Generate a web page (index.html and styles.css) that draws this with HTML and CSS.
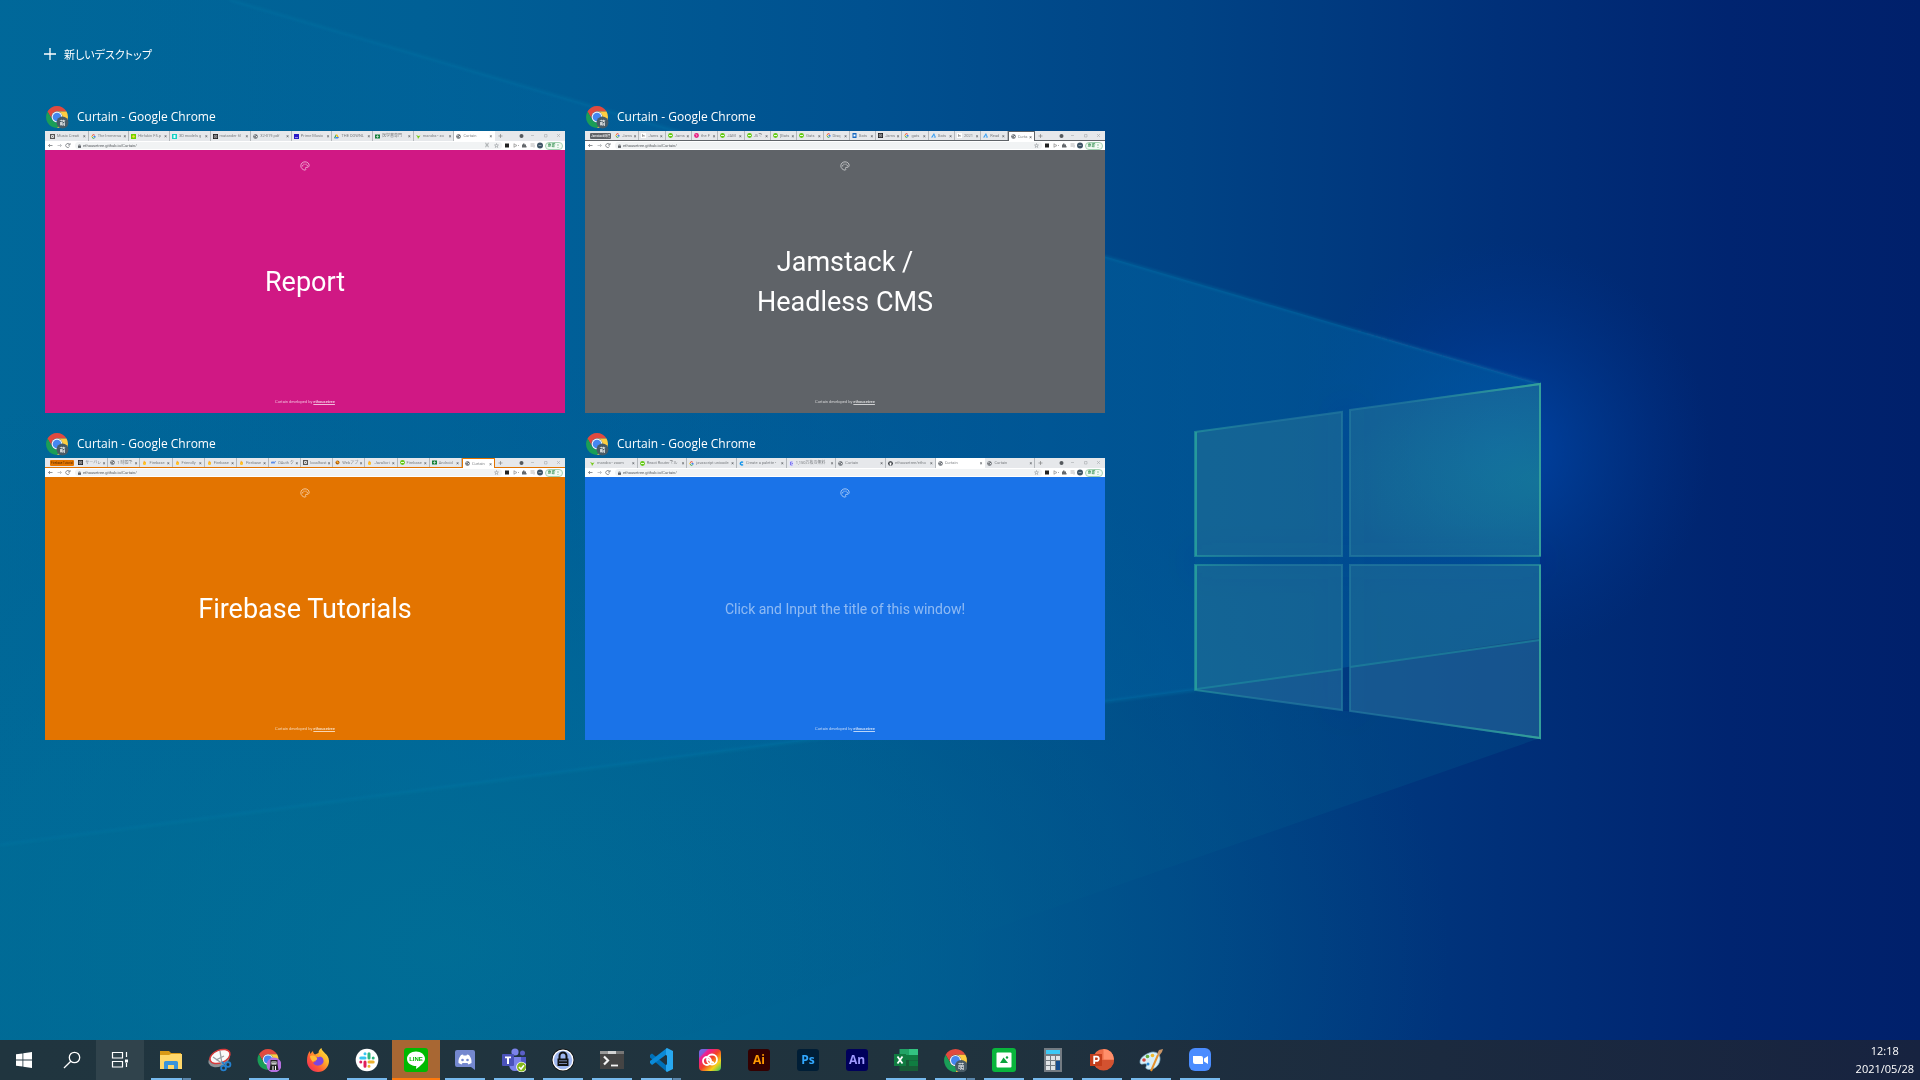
FILE: index.html
```html
<!DOCTYPE html>
<html lang="ja">
<head>
<meta charset="utf-8">
<meta name="viewport" content="width=device-width, initial-scale=1">
<title>タスク ビュー</title>
<link rel="stylesheet" href="styles.css">
</head>
<body>

<svg class="symbols" aria-hidden="true">
  <symbol id="chrome" viewBox="0 0 24 24">
    <path fill="#e04a3f" d="M12 6.5H21.5A11 11 0 0 0 2.5 6.5L7.2 14.7A5.5 5.5 0 0 1 12 6.5Z"/>
    <path fill="#ffcd40" d="M21.5 6.5H12A5.5 5.5 0 0 1 16.8 14.7L12 23A11 11 0 0 0 21.5 6.5Z"/>
    <path fill="#1a9e57" d="M2.5 6.5A11 11 0 0 0 12 23L16.8 14.7A5.5 5.5 0 0 1 7.2 14.7Z"/>
    <circle cx="12" cy="12" r="5.4" fill="#f4f4f4"/><circle cx="12" cy="12" r="4.3" fill="#4587f0"/>
  </symbol>
  <symbol id="chrome-moe" viewBox="0 0 24 24">
    <use href="#chrome" x="0" y="0" width="24" height="24"/>
    <circle cx="17.5" cy="17.5" r="6" fill="#495b66"/>
    <text x="17.5" y="20" text-anchor="middle" class="moe">萌</text>
  </symbol>
  <symbol id="palette" viewBox="0 0 24 24">
    <path fill="none" stroke="#fff" stroke-width="2.4" d="M12 22C6 21 2 17 2 11.500C2 6 6.500 2 12 2s10 3.500 10 8.500c0 3-2.500 5-5.500 5h-2c-1.500 0-2 1.500-1.200 2.600C14.500 20 13.800 22 12 22Z"/>
    <g fill="#fff"><circle cx="6.500" cy="11.500" r="1.600"/><circle cx="9.500" cy="7.500" r="1.600"/><circle cx="14.500" cy="7.500" r="1.600"/><circle cx="17.500" cy="11.500" r="1.600"/></g>
  </symbol>
  <symbol id="f-globe" viewBox="0 0 10 10"><circle cx="5" cy="5" r="4.500" fill="#5f6368"/><path fill="#e8eaed" d="M2 3l3-1 0 2-2 1zM6 4l2.500 0-1 3-2-1zM3 6l2 1-1 2z"/></symbol>
  <symbol id="f-google" viewBox="0 0 10 10"><g fill="none" stroke-width="2"><path stroke="#e94235" d="M2 3.500A3.500 3.500 0 0 1 7.500 2.500"/><path stroke="#fbbc04" d="M2 3.500A3.500 3.500 0 0 0 2 6.500"/><path stroke="#34a853" d="M2 6.500A3.500 3.500 0 0 0 7.500 7.500"/><path stroke="#4285f4" d="M5 5H8.500A3.500 3.500 0 0 1 7.500 7.500"/></g></symbol>
  <symbol id="f-green" viewBox="0 0 10 10"><circle cx="5" cy="5" r="4.800" fill="#63c916"/><path fill="#e9ffd8" d="M2 4h6v2H2z"/></symbol>
  <symbol id="f-pink" viewBox="0 0 10 10"><circle cx="5" cy="5" r="4.800" fill="#e81e82"/><path d="M3 3l3 1-1 3" stroke="#fff" fill="none"/></symbol>
  <symbol id="f-flame" viewBox="0 0 10 10"><path fill="#ffa000" d="M2 8L4 1l2 3 1-1 1 5-3 2z"/><path fill="#ffcb2b" d="M2 8l4-4 2 4-3 2z"/></symbol>
  <symbol id="f-dark" viewBox="0 0 10 10"><path fill="#202124" d="M0 0h10v10H0z"/><path fill="none" stroke="#fff" d="M2.500 2.500h5v5h-5zM4 4l2 2"/></symbol>
  <symbol id="f-frame" viewBox="0 0 10 10"><path fill="#555" d="M0 0h10v10H0z"/><path fill="#ddd" d="M2 2h6v6H2z"/><path stroke="#555" d="M3 3l4 4M7 3l-4 4"/></symbol>
  <symbol id="f-lime" viewBox="0 0 10 10"><path fill="#6ad300" d="M0 0h10v10H0z"/><circle cx="5" cy="5" r="2.500" fill="#ffd83b"/></symbol>
  <symbol id="f-teal" viewBox="0 0 10 10"><path fill="#14d0c5" d="M0 0h10v10H0z"/><path fill="#e4ffff" d="M3 2h4v6H3z"/></symbol>
  <symbol id="f-navy" viewBox="0 0 10 10"><path fill="#2717c7" d="M0 0h10v10H0z"/><path stroke="#fff" d="M2 7h6"/></symbol>
  <symbol id="f-drive" viewBox="0 0 10 10"><path fill="#34a853" d="M3.500 1L0 8l2 1 3-6z"/><path fill="#fbbc04" d="M3.500 1h3L10 7H7z"/><path fill="#4285f4" d="M2 9l1.500-3H10L8 9z"/></symbol>
  <symbol id="f-book" viewBox="0 0 10 10"><path fill="#16803a" d="M0 1h10v8H0z"/><path stroke="#fff" d="M2 5h6M5 2v6"/></symbol>
  <symbol id="f-leaf" viewBox="0 0 10 10"><path fill="#76c81b" d="M0 2l5 2 4-1-3 4-2 3-1-4z"/></symbol>
  <symbol id="f-blue" viewBox="0 0 10 10"><path fill="#1769c2" d="M1 0h8v10H1z"/><path fill="#fff" d="M3 3h4v4H3z"/></symbol>
  <symbol id="f-azure" viewBox="0 0 10 10"><path fill="#3aa0f3" d="M6 0L0 9h3l3-5 1 3-2 2h5z"/></symbol>
  <symbol id="f-page" viewBox="0 0 10 10"><path fill="#fff" d="M0 0h10v10H0z"/><path stroke="#666" d="M3 2v6M3 5h4M6 5v3"/></symbol>
  <symbol id="f-fox" viewBox="0 0 10 10"><circle cx="5" cy="5" r="4" fill="#a75c12"/><path fill="#ffb22d" d="M2 2l4 1 2 4-4-1z"/></symbol>
  <symbol id="f-doc" viewBox="0 0 10 10"><path fill="#e5e5f8" d="M0 0h10v10H0z"/><path fill="none" stroke="#5d55ef" stroke-width="1.500" d="M7 2H3v6h4M5 5h3"/></symbol>
  <symbol id="f-c" viewBox="0 0 10 10"><path fill="none" stroke="#1595ea" stroke-width="3" d="M8 3A3 3 0 1 0 8 7"/></symbol>
  <symbol id="f-w" viewBox="0 0 10 10"><path fill="none" stroke="#4e82e8" stroke-width="1.800" d="M0 3l2 4 2-4 2 4 3-5"/></symbol>
  <symbol id="f-git" viewBox="0 0 10 10"><circle cx="5" cy="5" r="4.700" fill="#24292e"/><path fill="#fff" d="M3 3h4v3L6 9H4L3 6z"/></symbol>
  <symbol id="nav" viewBox="0 0 30 9">
    <g fill="none" stroke="#75797d" stroke-width=".8"><path d="M7.500 4.500h-4M5 3L3.500 4.500 5 6"/><path stroke="#b5b8bb" d="M12.500 4.500h4M15 3l1.500 1.500L15 6"/><path d="M24.500 3.500a2 2 0 1 0 0 2M25 2v2h-2"/></g>
  </symbol>
  <symbol id="lock" viewBox="0 0 4 5"><path fill="#5f6368" d="M0 2h4v3H0z"/><path fill="none" stroke="#5f6368" stroke-width=".8" d="M1 2V1h2v1"/></symbol>
  <symbol id="star" viewBox="0 0 10 10"><path fill="none" stroke="#888c90" d="M5 1l1 3h3L6.500 6l1 3L5 7.300 2.500 9l1-3L1 4h3z"/></symbol>
  <symbol id="exts" viewBox="0 0 43 9">
    <path fill="#222" d="M3 2.500h4v4H3z"/><path fill="none" stroke="#999" stroke-width=".8" d="M12 2.500v4M12 3l3 1.500-3 1.500M16 4.500h1"/>
    <path fill="#65696d" d="M20 3.500h1v-1h1.500v1H24v1.500h.5v1.500H20z"/><path fill="none" stroke="#a5a5a5" stroke-width=".8" d="M28.500 3h4M28.500 5h2.500M32 4v2.500"/>
    <circle cx="38" cy="4.500" r="3" fill="#3f5566"/><path stroke="#8f9da8" d="M36.500 4.500h3"/>
  </symbol>
  <symbol id="winctl" viewBox="0 0 70 10">
    <path stroke="#777" d="M3.500 5h4M5.500 3v4" stroke-width=".6"/><circle cx="26.500" cy="5" r="2" fill="#55595d"/>
    <path fill="none" stroke="#a8abae" stroke-width=".6" d="M36 4.500h3M49.500 3.500h2.500v2.500h-2.500zM62 3l3 3M65 3l-3 3"/>
  </symbol>
</svg>

<svg class="wallpaper" viewBox="0 0 1920 1080" preserveAspectRatio="none" aria-hidden="true">
  <defs>
    <linearGradient id="base" x1="0" y1="0" x2="1" y2="0">
      <stop offset="0" stop-color="#006798"/><stop offset=".22" stop-color="#006096"/><stop offset=".45" stop-color="#005190"/>
      <stop offset=".62" stop-color="#004385"/><stop offset=".78" stop-color="#003079"/><stop offset=".9" stop-color="#002470"/><stop offset="1" stop-color="#00206b"/>
    </linearGradient>
    <radialGradient id="teal" gradientUnits="userSpaceOnUse" cx="450" cy="950" r="1000" gradientTransform="matrix(1 0 0 .6 0 380)">
      <stop offset="0" stop-color="#007096" stop-opacity=".85"/><stop offset=".5" stop-color="#006c94" stop-opacity=".5"/><stop offset="1" stop-color="#005c8c" stop-opacity="0"/>
    </radialGradient>
    <radialGradient id="glow" gradientUnits="userSpaceOnUse" cx="1500" cy="450" r="210">
      <stop offset="0" stop-color="#0048b0" stop-opacity=".85"/><stop offset=".4" stop-color="#0042a2" stop-opacity=".5"/><stop offset="1" stop-color="#003490" stop-opacity="0"/>
    </radialGradient>
    <linearGradient id="beam" gradientUnits="userSpaceOnUse" x1="300" y1="0" x2="1540" y2="0">
      <stop offset="0" stop-color="#0070a8" stop-opacity=".1"/><stop offset=".6" stop-color="#0068a4" stop-opacity=".42"/><stop offset="1" stop-color="#0064a4" stop-opacity=".5"/>
    </linearGradient>
    <linearGradient id="lower" gradientUnits="userSpaceOnUse" x1="0" y1="0" x2="1540" y2="0">
      <stop offset="0" stop-color="#00759a" stop-opacity=".1"/><stop offset="1" stop-color="#004e88" stop-opacity=".4"/>
    </linearGradient>
    <linearGradient id="ray" gradientUnits="userSpaceOnUse" x1="0" y1="0" x2="1540" y2="0">
      <stop offset="0" stop-color="#1688b0" stop-opacity=".14"/><stop offset="1" stop-color="#1687b5" stop-opacity=".28"/>
    </linearGradient>
    <radialGradient id="shine" gradientUnits="userSpaceOnUse" cx="1540" cy="480" r="200" gradientTransform="matrix(1 0 0 .5 0 240)">
      <stop offset="0" stop-color="#148c98" stop-opacity=".4"/><stop offset="1" stop-color="#148c98" stop-opacity="0"/>
    </radialGradient>
    <linearGradient id="edge" gradientUnits="userSpaceOnUse" x1="1195" y1="0" x2="1541" y2="0">
      <stop offset="0" stop-color="#24929c"/><stop offset=".2" stop-color="#22789e"/><stop offset=".8" stop-color="#22789e"/><stop offset="1" stop-color="#2a909c"/>
    </linearGradient>
    <linearGradient id="rim" gradientUnits="userSpaceOnUse" x1="1400" y1="0" x2="1541" y2="0">
      <stop offset="0" stop-color="#2a9c9c" stop-opacity="0"/><stop offset="1" stop-color="#34a09a"/>
    </linearGradient>
    <filter id="soft"><feGaussianBlur stdDeviation="14"/></filter>
    <filter id="hair"><feGaussianBlur stdDeviation="1"/></filter>
  </defs>
  <path fill="url(#base)" d="M0 0h1920v1080H0z"/>
  <path fill="url(#teal)" d="M0 0h1920v1080H0z"/>
  <path fill="url(#glow)" d="M1100 100h820v720h-820z"/>
  <path fill="url(#beam)" d="M230 0L1540 384V638L1195 690 0 845V0z"/>
  <path fill="url(#lower)" d="M1195 690L1540 738 560 1080H0V845z"/>
  <path fill="none" stroke="url(#ray)" stroke-width="3" filter="url(#hair)" d="M230 0L1540 384M0 845L1195 690"/>
  <path fill="#003e92" fill-opacity=".4" filter="url(#soft)" d="M1195 557h345v8h-345zM1342 410h8v300h-8z"/>
  <g fill="#2b7a98" fill-opacity=".44">
    <path d="M1195 432L1342 412V556H1195z"/><path d="M1350 410L1540 384V556H1350z"/>
    <path d="M1195 565H1342V710L1195 690z"/><path d="M1350 565H1540V738L1350 711z"/>
  </g>
  <path fill="url(#shine)" d="M1350 410L1540 384V556H1350z"/>
  <path fill="#2060a8" fill-opacity=".25" d="M1195 690L1342 669V710zM1350 667L1540 640V738L1350 711z"/>
  <path fill="none" stroke="#1f8a9f" stroke-width="2" stroke-opacity=".65" d="M1197 689L1342 669M1350 667L1540 640"/>
  <path fill="none" stroke="url(#edge)" stroke-width="2" stroke-opacity=".75" d="M1195 432L1342 412V556H1195zM1350 410L1540 384V556H1350zM1195 565H1342V710L1195 690zM1350 565H1540V738L1350 711z"/>
  <path fill="none" stroke="url(#rim)" stroke-width="2" d="M1400 403L1540 384V556M1540 565V738L1400 718"/>
  <path stroke="#249a9c" stroke-width="2" d="M1196 565V690M1196 432V556"/>
</svg>

<main class="task-view">
  <button class="new-desktop" type="button">
    <svg viewBox="0 0 12 12" aria-hidden="true"><path d="M6 0v12M0 6h12" stroke="#fff" stroke-width="1.300"/></svg>
    <span>新しいデスクトップ</span>
  </button>

  <div class="windows">
    <section class="window">
      <h2 class="caption"><svg aria-hidden="true"><use href="#chrome-moe"/></svg>Curtain - Google Chrome</h2>
      <div class="thumb pink">
        <div class="tabstrip">
          <ul class="tabs">
            <li><svg><use href="#f-frame"/></svg><span>Music Creati</span></li>
            <li><svg><use href="#f-google"/></svg><span>The Immersa</span></li>
            <li><svg><use href="#f-lime"/></svg><span>Hirfukin F5.p</span></li>
            <li><svg><use href="#f-teal"/></svg><span>3D models g</span></li>
            <li><svg><use href="#f-dark"/></svg><span>matander fil</span></li>
            <li><svg><use href="#f-globe"/></svg><span>32-019.pdf</span></li>
            <li><svg><use href="#f-navy"/></svg><span>Prime Music</span></li>
            <li><svg><use href="#f-drive"/></svg><span>THE DOWNL</span></li>
            <li><svg><use href="#f-book"/></svg><span>医学書専門</span></li>
            <li><svg><use href="#f-leaf"/></svg><span>mandra - zo</span></li>
            <li class="active"><svg><use href="#f-globe"/></svg><span>Curtain</span></li>
          </ul>
          <svg class="winctl"><use href="#winctl"/></svg>
        </div>
        <div class="toolbar">
          <svg class="nav"><use href="#nav"/></svg>
          <div class="omnibox"><svg class="lock"><use href="#lock"/></svg><span>ethousetree.github.io/Curtain/</span><b>⌘</b><svg class="star"><use href="#star"/></svg></div>
          <svg class="exts"><use href="#exts"/></svg><span class="update">更新 ⋮</span>
        </div>
        <div class="page">
          <svg class="palette"><use href="#palette"/></svg>
          <p class="title">Report</p>
          <p class="credit">Curtain developed by <a href="#">ethousetree</a></p>
        </div>
      </div>
    </section>

    <section class="window">
      <h2 class="caption"><svg aria-hidden="true"><use href="#chrome-moe"/></svg>Curtain - Google Chrome</h2>
      <div class="thumb grey grouped">
        <div class="tabstrip">
          <span class="group">Jamstack関連</span>
          <ul class="tabs">
            <li><svg><use href="#f-google"/></svg><span>Jams</span></li>
            <li><svg><use href="#f-page"/></svg><span>Jams</span></li>
            <li><svg><use href="#f-green"/></svg><span>Jams</span></li>
            <li><svg><use href="#f-pink"/></svg><span>the F</span></li>
            <li><svg><use href="#f-green"/></svg><span>JAM</span></li>
            <li><svg><use href="#f-green"/></svg><span>JSで</span></li>
            <li><svg><use href="#f-green"/></svg><span>[Gats</span></li>
            <li><svg><use href="#f-green"/></svg><span>Gats</span></li>
            <li><svg><use href="#f-google"/></svg><span>Disq</span></li>
            <li><svg><use href="#f-blue"/></svg><span>Gats</span></li>
            <li><svg><use href="#f-dark"/></svg><span>Jams</span></li>
            <li><svg><use href="#f-google"/></svg><span>gats</span></li>
            <li><svg><use href="#f-azure"/></svg><span>Gats</span></li>
            <li><svg><use href="#f-page"/></svg><span>2021</span></li>
            <li><svg><use href="#f-azure"/></svg><span>Read</span></li>
            <li class="active"><svg><use href="#f-globe"/></svg><span>Curta</span></li>
          </ul>
          <svg class="winctl"><use href="#winctl"/></svg>
        </div>
        <div class="toolbar">
          <svg class="nav"><use href="#nav"/></svg>
          <div class="omnibox"><svg class="lock"><use href="#lock"/></svg><span>ethousetree.github.io/Curtain/</span><svg class="star"><use href="#star"/></svg></div>
          <svg class="exts"><use href="#exts"/></svg><span class="update">更新 ⋮</span>
        </div>
        <div class="page">
          <svg class="palette"><use href="#palette"/></svg>
          <p class="title">Jamstack /<br>Headless CMS</p>
          <p class="credit">Curtain developed by <a href="#">ethousetree</a></p>
        </div>
      </div>
    </section>

    <section class="window">
      <h2 class="caption"><svg aria-hidden="true"><use href="#chrome-moe"/></svg>Curtain - Google Chrome</h2>
      <div class="thumb orange grouped">
        <div class="tabstrip">
          <span class="group">Firebase Tutorial</span>
          <ul class="tabs">
            <li><svg><use href="#f-dark"/></svg><span>サーバレ</span></li>
            <li><svg><use href="#f-globe"/></svg><span>1 時間で</span></li>
            <li><svg><use href="#f-flame"/></svg><span>Firebase</span></li>
            <li><svg><use href="#f-flame"/></svg><span>Friendly</span></li>
            <li><svg><use href="#f-flame"/></svg><span>Firebase</span></li>
            <li><svg><use href="#f-flame"/></svg><span>Firebase</span></li>
            <li><svg><use href="#f-w"/></svg><span>OAuth ク</span></li>
            <li><svg><use href="#f-frame"/></svg><span>localhost</span></li>
            <li><svg><use href="#f-fox"/></svg><span>Webアプ</span></li>
            <li><svg><use href="#f-flame"/></svg><span>JavaScri</span></li>
            <li><svg><use href="#f-green"/></svg><span>Firebase</span></li>
            <li><svg><use href="#f-book"/></svg><span>Android</span></li>
            <li class="active"><svg><use href="#f-globe"/></svg><span>Curtain</span></li>
          </ul>
          <svg class="winctl"><use href="#winctl"/></svg>
        </div>
        <div class="toolbar">
          <svg class="nav"><use href="#nav"/></svg>
          <div class="omnibox"><svg class="lock"><use href="#lock"/></svg><span>ethousetree.github.io/Curtain/</span><svg class="star"><use href="#star"/></svg></div>
          <svg class="exts"><use href="#exts"/></svg><span class="update">更新 ⋮</span>
        </div>
        <div class="page">
          <svg class="palette"><use href="#palette"/></svg>
          <p class="title">Firebase Tutorials</p>
          <p class="credit">Curtain developed by <a href="#">ethousetree</a></p>
        </div>
      </div>
    </section>

    <section class="window">
      <h2 class="caption"><svg aria-hidden="true"><use href="#chrome-moe"/></svg>Curtain - Google Chrome</h2>
      <div class="thumb blue">
        <div class="tabstrip">
          <ul class="tabs">
            <li><svg><use href="#f-leaf"/></svg><span>mandra - zoom</span></li>
            <li><svg><use href="#f-green"/></svg><span>React Routerでル</span></li>
            <li><svg><use href="#f-google"/></svg><span>javascript unicode</span></li>
            <li><svg><use href="#f-c"/></svg><span>Create a palette -</span></li>
            <li><svg><use href="#f-doc"/></svg><span>1,150万枚の無料</span></li>
            <li><svg><use href="#f-globe"/></svg><span>Curtain</span></li>
            <li><svg><use href="#f-git"/></svg><span>ethousetree/etho</span></li>
            <li class="active"><svg><use href="#f-globe"/></svg><span>Curtain</span></li>
            <li><svg><use href="#f-globe"/></svg><span>Curtain</span></li>
          </ul>
          <svg class="winctl"><use href="#winctl"/></svg>
        </div>
        <div class="toolbar">
          <svg class="nav"><use href="#nav"/></svg>
          <div class="omnibox"><svg class="lock"><use href="#lock"/></svg><span>ethousetree.github.io/Curtain/</span><svg class="star"><use href="#star"/></svg></div>
          <svg class="exts"><use href="#exts"/></svg><span class="update">更新 ⋮</span>
        </div>
        <div class="page">
          <svg class="palette"><use href="#palette"/></svg>
          <input class="title-input" type="text" aria-label="Title" placeholder="Click and Input the title of this window!">
          <p class="credit">Curtain developed by <a href="#">ethousetree</a></p>
        </div>
      </div>
    </section>
  </div>
</main>

<footer class="taskbar">
  <div class="system">
    <button type="button" aria-label="スタート"><svg viewBox="0 0 24 24"><path fill="#fff" d="M4 6.300l6.500-.9v6.200H4zM11.300 5.300L20 4v7.600h-8.700zM4 12.400h6.500v6.200L4 17.700zM11.300 12.400H20V20l-8.700-1.200z"/></svg></button>
    <button type="button" aria-label="検索"><svg viewBox="0 0 24 24"><g fill="none" stroke="#fff" stroke-width="1.300"><circle cx="14.500" cy="9.500" r="5.200"/><path d="M10.800 13.200L4 20"/></g></svg></button>
    <button type="button" class="current" aria-label="タスク ビュー"><svg viewBox="0 0 24 24"><path fill="none" stroke="#fff" stroke-width="1.200" d="M4.500 4.500h10v5.500h-10zM4.500 13.500h10v5.500h-10zM18.500 4v5M18.500 15v4"/><path fill="#fff" d="M17 11.500h3v3h-3z"/></svg></button>
  </div>
  <div class="apps">
    <button type="button" class="open many" aria-label="エクスプローラー"><svg viewBox="0 0 24 24"><path fill="#d99a17" d="M1 3h9l2 2h10v4H1z"/><path fill="#ffd86b" d="M1 7h9l2-1h11v15H1z"/><path fill="#3a94dc" d="M5 14.500q0-1.500 1.500-1.500h11q1.500 0 1.500 1.500V21h-4v-4H9v4H5z"/></svg></button>
    <button type="button" aria-label="Snipping Tool"><svg viewBox="0 0 24 24"><ellipse cx="11" cy="11.500" rx="11" ry="7" transform="rotate(-22 11 11.500)" fill="#8e9397"/><ellipse cx="12" cy="8.500" rx="10.500" ry="6.300" transform="rotate(-22 12 8.500)" fill="#fafafa" stroke="#d93a3a" stroke-width="1.500"/><path stroke="#999ea3" stroke-width="1.300" d="M5 9l10 7M12 3l2 13M8 12l8-4"/><g fill="none" stroke="#2481cf" stroke-width="1.800"><path d="M14 14l2 2"/><circle cx="15.500" cy="20" r="2.400"/><circle cx="20" cy="16.500" r="2.400"/></g></svg></button>
    <button type="button" class="open" aria-label="Google Chrome"><svg viewBox="0 0 24 24"><use href="#chrome" x="-1" y="0" width="24" height="23"/><circle cx="17" cy="17" r="7.500" fill="#b570e0"/><path fill="#222" d="M13.500 12h7v4l1 6h-9l1-6z"/><path fill="#fff" d="M14.500 13.500h5v3h-5zM15.500 18h1v4h-1zM18 18h1v4h-1z"/><path fill="#222" d="M15.500 14h1v1.500h-1zM17.500 14h1v1.500h-1z"/></svg></button>
    <button type="button" aria-label="Firefox"><svg viewBox="0 0 24 24"><defs><linearGradient id="fx" x1="1" y1="0" x2="0" y2="1"><stop offset="0" stop-color="#fff04a"/><stop offset=".35" stop-color="#ffb32b"/><stop offset=".65" stop-color="#ff5a35"/><stop offset="1" stop-color="#ec1e68"/></linearGradient></defs><path fill="url(#fx)" d="M12.500 5c0-2 1-4 3-5 0 4 7.500 6 7.500 13a11 11 0 0 1-22 0C1 8 2 5 4 3v3l3-3c0 2 1 3 2 3.500z"/><path fill="#7d45e0" d="M7 9c3-1 5 1 6 0 3-1 5 2 4.500 5A6 6 0 0 1 7 15l3-2z"/><path fill="#ffbd35" d="M4 8c4-1 6 0 7 2 1 3-3 2-4 4-1-1-3-3-3-6z"/></svg></button>
    <button type="button" class="open" aria-label="Slack"><svg viewBox="0 0 24 24"><circle cx="12" cy="12" r="11.300" fill="#fff"/><g stroke-width="3" stroke-linecap="round"><path stroke="#36c5f0" d="M10 5.800v0M5.800 10h4.200"/><path stroke="#2eb67d" d="M14 5.800V10M18.200 10v0"/><path stroke="#ecb22e" d="M14 14h4.200M14 18.200v0"/><path stroke="#e01e5a" d="M10 14v4.200M5.800 14v0"/></g></svg></button>
    <button type="button" class="alert" aria-label="LINE"><svg viewBox="0 0 24 24"><rect width="24" height="24" rx="3" fill="#00b900"/><path fill="#fff" d="M12 3.500c5 0 9 3.200 9 7.200 0 3.300-4 6.800-9 10.300l.3-3C7 18 3 15 3 10.700 3 6.700 7 3.500 12 3.500Z"/><text x="12" y="13" text-anchor="middle" class="line-word">LINE</text></svg></button>
    <button type="button" class="open" aria-label="Discord"><svg viewBox="0 0 24 24"><path fill="#7488cf" d="M4 2h16q2 0 2 2v18l-4-3H4q-2 0-2-2V4q0-2 2-2z"/><path fill="#fff" d="M8 7l2-.6.5 1h3l.5-1 2 .6c2 2.500 2.800 5 2.500 8l-3 1.500-1-1.500h-5l-1 1.500-3-1.500C5.200 12 6 9.500 8 7z"/><circle cx="9.500" cy="12" r="1.300" fill="#7488cf"/><circle cx="14.500" cy="12" r="1.300" fill="#7488cf"/></svg></button>
    <button type="button" class="open" aria-label="Microsoft Teams"><svg viewBox="0 0 24 24"><circle cx="20.500" cy="5" r="2.500" fill="#5b5fc7"/><circle cx="13" cy="4" r="3.600" fill="#7b83eb"/><path fill="#5059c9" d="M16 9h8v8q-2 4-6 3z"/><path fill="#7b83eb" d="M7 9h12v8q-1 6-6 6t-6-6z"/><rect y="6" width="12" height="12" rx="1" fill="#4a52ba"/><path fill="#fff" d="M3 8.500h6v1.700H7V16H5v-5.800H3z"/><circle cx="19.500" cy="19" r="5.300" fill="#fff"/><circle cx="19.500" cy="19" r="4.500" fill="#84b818"/><path fill="none" stroke="#fff" stroke-width="1.600" d="M17 19l2 2 3-3.800"/></svg></button>
    <button type="button" class="open" aria-label="KeePass"><svg viewBox="0 0 24 24"><circle cx="12" cy="12" r="11.300" fill="#111"/><circle cx="12" cy="12" r="9.900" fill="#9db5ed" stroke="#fff" stroke-width="1.300"/><path fill="none" stroke="#111" stroke-width="2" d="M8.500 11V8a3.500 3.500 0 0 1 7 0v3"/><path fill="#111" d="M6.500 10.500h11V18h-11z"/><path stroke="#9db5ed" stroke-width=".7" d="M8 12.800h8M8 15.500h8"/></svg></button>
    <button type="button" class="open" aria-label="Windows Terminal"><svg viewBox="0 0 24 24"><path fill="#444" d="M0 3h24v18H0z"/><path fill="#999" d="M0 3h8v3H0z"/><path fill="#d2d2d2" d="M8 3h8v3H8z"/><path fill="#777" d="M16 3h8v3h-8z"/><path fill="none" stroke="#f4f4f4" stroke-width="2.200" d="M4 8.500l4 4-4 4"/><path stroke="#f4f4f4" stroke-width="1.800" d="M11 17.500h7"/></svg></button>
    <button type="button" class="open many" aria-label="Visual Studio Code"><svg viewBox="0 0 24 24"><path fill="#0071b8" d="M1 7l2-1.500 15 12.500v6L1 9.500z"/><path fill="#0a8ad8" d="M1 15l2 2L18 6V0L1 13z"/><path fill="#28a8f0" d="M18 0l6 3v18l-6 3-1-1V1z"/><path fill="#20333d" d="M18 7v10l-6-5z"/></svg></button>
    <button type="button" aria-label="Creative Cloud"><svg viewBox="0 0 24 24"><defs><linearGradient id="cc" x1="0" y1="0" x2="1" y2="1"><stop offset="0" stop-color="#b54fe8"/><stop offset=".28" stop-color="#ee1f8b"/><stop offset=".5" stop-color="#f34225"/><stop offset=".75" stop-color="#f6d21a"/><stop offset="1" stop-color="#24c46b"/></linearGradient></defs><rect x="1" y="1" width="22" height="22" rx="4" fill="url(#cc)"/><path fill="#3784f5" d="M1 10V5q0-4 4-4h5z" opacity=".55"/><g fill="none" stroke="#fff" stroke-width="1.800"><circle cx="9" cy="13" r="4"/><circle cx="14" cy="11.500" r="5"/><path d="M9 11c2 0 4 4 7 3.500"/></g></svg></button>
    <button type="button" aria-label="Illustrator"><svg viewBox="0 0 24 24"><rect x="1" y="1" width="22" height="22" rx="3" fill="#330000"/><text x="12" y="16" text-anchor="middle" class="adobe" fill="#ff9a00">Ai</text></svg></button>
    <button type="button" aria-label="Photoshop"><svg viewBox="0 0 24 24"><rect x="1" y="1" width="22" height="22" rx="3" fill="#001e36"/><text x="12" y="16" text-anchor="middle" class="adobe" fill="#31a8ff">Ps</text></svg></button>
    <button type="button" aria-label="Animate"><svg viewBox="0 0 24 24"><rect x="1" y="1" width="22" height="22" rx="3" fill="#00005b"/><text x="12" y="16" text-anchor="middle" class="adobe" fill="#9f99ff">An</text></svg></button>
    <button type="button" class="open" aria-label="Excel"><svg viewBox="0 0 24 24"><path fill="#21a366" d="M5.500 1H15v11H5.500z"/><path fill="#33c481" d="M15 1h9v6h-9z"/><path fill="#107c41" d="M15 7h9v5.500h-9zM5.500 7H15v5.500H5.500z"/><path fill="#185c37" d="M5.500 12.500H24V23H5.500z"/><path fill="#107c41" d="M15 12.500h9V18h-9zM0 6h12v12H0z"/><path stroke="#fff" stroke-width="1.800" d="M3.500 8.500l5 7M8.500 8.500l-5 7"/></svg></button>
    <button type="button" class="open many" aria-label="Google Chrome"><svg viewBox="0 0 24 24"><use href="#chrome-moe" x="0" y="0" width="25" height="25"/></svg></button>
    <button type="button" class="open" aria-label="LINE スタンプ"><svg viewBox="0 0 24 24"><rect width="24" height="24" rx="3" fill="#09b53c"/><rect x="4.500" y="4.500" width="15" height="15" rx="1" fill="#fff"/><path fill="#09a33c" d="M8 15l3.500-5.500L16 15z"/><circle cx="15" cy="9.500" r="1.200" fill="#09a33c"/></svg></button>
    <button type="button" class="open" aria-label="電卓"><svg viewBox="0 0 24 24"><path fill="#737b82" d="M3 0h18v24H3z"/><path fill="#3cc8f5" d="M5 2h14v4H5z"/><path fill="#dfe3e6" d="M5 8h4v4H5zM10 8h4v4h-4zM15 8h4v4h-4zM5 13h4v4H5zM10 13h4v4h-4zM5 18h4v4H5zM10 18h4v4h-4z"/><path fill="#164c8c" d="M15 13h4v9h-4z"/></svg></button>
    <button type="button" class="open" aria-label="PowerPoint"><svg viewBox="0 0 24 24"><circle cx="13.500" cy="11.500" r="10.500" fill="#ed6c47"/><path fill="#ff8f6b" d="M13.500 1A10.500 10.500 0 0 1 24 11.500H13.500z"/><path fill="#d35230" d="M3 12h21a10.500 10.500 0 0 1-21 0z"/><path fill="#c43e1c" d="M0 6h12v12H0z"/><path fill="none" stroke="#fff" stroke-width="1.800" d="M4.200 16V8.700h2.500a2 2 0 0 1 0 4.200H4.200"/></svg></button>
    <button type="button" class="open" aria-label="ペイント"><svg viewBox="0 0 24 24"><path fill="#d7effa" stroke="#79a7c3" stroke-width=".7" d="M10 5c6-3 12 1 11 7-1 7-8 11-13 9-3-1 1-4-1-5s-6 2-6-2c0-4 4-7 9-9z"/><circle cx="5" cy="12" r="1.800" fill="#d84a3c"/><circle cx="8.500" cy="8.500" r="1.800" fill="#63ad3a"/><circle cx="13.500" cy="7.500" r="1.800" fill="#f1ba2d"/><circle cx="9" cy="16" r="1.500" fill="#2b8bd9"/><path stroke="#e6912c" stroke-width="2" d="M12 23L19 7"/><path fill="#c99567" d="M18 6l2-4 4-1-1 3-3 4z"/></svg></button>
    <button type="button" class="open" aria-label="Zoom"><svg viewBox="0 0 24 24"><rect x="1" y="0" width="22" height="23" rx="6" fill="#4a8cff"/><path fill="#fff" d="M5 8h8q2 0 2 2v6H7q-2 0-2-2zM16 10.500L20 8v8l-4-2.500z"/></svg></button>
  </div>
  <div class="clock"><time>12:18</time><time>2021/05/28</time></div>
</footer>
</body>
</html>
```
FILE: styles.css
```css
* { box-sizing: border-box; }

body {
  margin: 0;
  min-height: 100vh;
  display: flex;
  flex-direction: column;
  background: #004a8a;
  color: #fff;
  font-family: "Open Sans", "Noto Sans", "Noto Sans CJK JP", sans-serif;
  font-size: 12px;
  line-height: 18px;
}

button { border: 0; padding: 0; background: none; color: inherit; font: inherit; }
h2, p, ul { margin: 0; padding: 0; font-weight: 400; list-style: none; }
svg { display: block; flex: none; }

.symbols { display: none; }
.wallpaper { position: fixed; inset: 0; width: 100%; height: 100%; z-index: -1; }

.moe { font: 6px "Noto Sans CJK JP", sans-serif; fill: #fff; }
.line-word { font: bold 6px "Liberation Sans", sans-serif; fill: #00b900; }
.adobe { font: bold 12px "Open Sans", sans-serif; }

/* Task view */
.task-view { flex: 1; padding: 45px; }

.new-desktop {
  display: flex;
  align-items: center;
  gap: 8px;
  margin-left: -1px;
  font-family: "Noto Sans CJK JP", sans-serif;
  font-size: 11px;
  font-feature-settings: "palt";
}
.new-desktop svg { width: 12px; height: 12px; }

.windows {
  display: grid;
  grid-template-columns: repeat(2, minmax(0, 520px));
  gap: 18px 20px;
  margin-top: 41px;
}

.caption {
  display: flex;
  align-items: center;
  gap: 8px;
  height: 27px;
  padding-bottom: 2px;
  font-size: 12px;
}
.caption svg { width: 24px; height: 24px; }

.thumb {
  --page: #5f6368;
  display: flex;
  flex-direction: column;
  aspect-ratio: 520 / 282;
  background: var(--page);
}
.pink { --page: #d01884; }
.grey { --page: #5f6368; }
.orange { --page: #e37400; }
.blue { --page: #1a73e8; }

/* Miniature browser chrome */
.tabstrip {
  display: flex;
  align-items: stretch;
  height: 10px;
  padding-left: 3px;
  background: #e6e8eb;
  color: #55595d;
  font-family: Roboto, "Noto Sans CJK JP", sans-serif;
  font-size: 4px;
  line-height: 10px;
}
.grouped .tabstrip { border-bottom: 1px solid var(--page); }
.group {
  align-self: center;
  flex: none;
  height: 6px;
  margin: 0 2px;
  padding: 0 1px;
  border-radius: 1px;
  background: var(--page);
  color: #fff;
  font-size: 3px;
  line-height: 6px;
}
.orange .group { color: #5b2f00; }
.tabs { display: flex; flex: 1; min-width: 0; }
.tabs li {
  display: flex;
  flex: 1 1 0;
  align-items: center;
  gap: 2px;
  min-width: 0;
  padding: 0 2px;
  border-right: 1px solid #b4b8bc;
}
.tabs li svg { width: 5px; height: 5px; }
.tabs span { flex: 1; min-width: 0; white-space: nowrap; opacity: .75; }
.tabs li::after { content: "×"; font-size: 5px; }
.tabs .active { background: #fff; border-color: #fff; }
.grouped .tabs .active {
  border: 1px solid var(--page);
  border-bottom: 0;
  border-radius: 1px 1px 0 0;
  margin-bottom: -1px;
}
.winctl { width: 70px; height: 10px; }

.toolbar {
  display: flex;
  align-items: center;
  height: 9px;
  padding-right: 2px;
  background: #fff;
  color: #55595d;
  font-family: Roboto, "Noto Sans CJK JP", sans-serif;
  font-size: 4px;
  line-height: 7px;
}
.nav { width: 30px; height: 9px; }
.omnibox {
  display: flex;
  flex: 1;
  align-items: center;
  height: 7px;
  padding: 0 3px;
  border-radius: 4px;
  background: #f1f3f4;
}
.omnibox span { flex: 1; padding-left: 2px; }
.omnibox b { font-size: 4px; margin-right: 5px; }
.lock { width: 3px; height: 4px; }
.star { width: 5px; height: 5px; }
.exts { width: 43px; height: 9px; }
.update {
  width: 18px;
  height: 8px;
  border: 1px solid #a5d3b3;
  border-radius: 4px;
  background: #f2faf4;
  color: #188038;
  line-height: 6px;
  text-align: center;
}

/* Curtain page */
.page {
  flex: 1;
  display: grid;
  grid-template-rows: 28px 1fr 28px;
  place-items: center;
  font-family: Roboto, sans-serif;
}
.palette { align-self: end; width: 10px; height: 10px; margin-bottom: 7px; opacity: .6; }
.title { font-size: 27px; line-height: 40px; text-align: center; }
.title-input {
  width: 80%;
  border: 0;
  padding: 0;
  background: none;
  color: #fff;
  font: 14px/20px Roboto, sans-serif;
  text-align: center;
}
.title-input::placeholder { color: #fff; opacity: .5; }
.credit {
  align-self: end;
  margin-bottom: 8px;
  font-size: 4px;
  line-height: 6px;
  color: rgba(255, 255, 255, .7);
}
.credit a { color: inherit; font-weight: 700; }

/* Taskbar */
.taskbar {
  display: flex;
  height: 40px;
  background: linear-gradient(90deg, #20353f 0%, #20333e 50%, #1b2a3f 75%, #172340 100%);
}
.system, .apps { display: flex; }
.apps { gap: 1px; margin-left: 3px; }
.taskbar button {
  position: relative;
  display: grid;
  place-items: center;
  width: 48px;
  height: 40px;
}
.taskbar button svg { width: 24px; height: 24px; }
.taskbar .current { background: #30434c; }
.taskbar .alert { background: #a86733; }
.open::after, .alert::after {
  content: "";
  position: absolute;
  inset: auto 4px 0;
  height: 2px;
  background: #76b9ed;
}
.many::after { background: linear-gradient(90deg, #76b9ed 31px, #34546a 31px, #34546a 32px, #5a86ab 32px); }
.alert::after { inset: auto 0 0; background: #ff7a0c; }
.clock {
  display: flex;
  flex-direction: column;
  justify-content: center;
  margin-left: auto;
  padding-right: 6px;
  font-size: 11px;
  text-align: center;
}
```
